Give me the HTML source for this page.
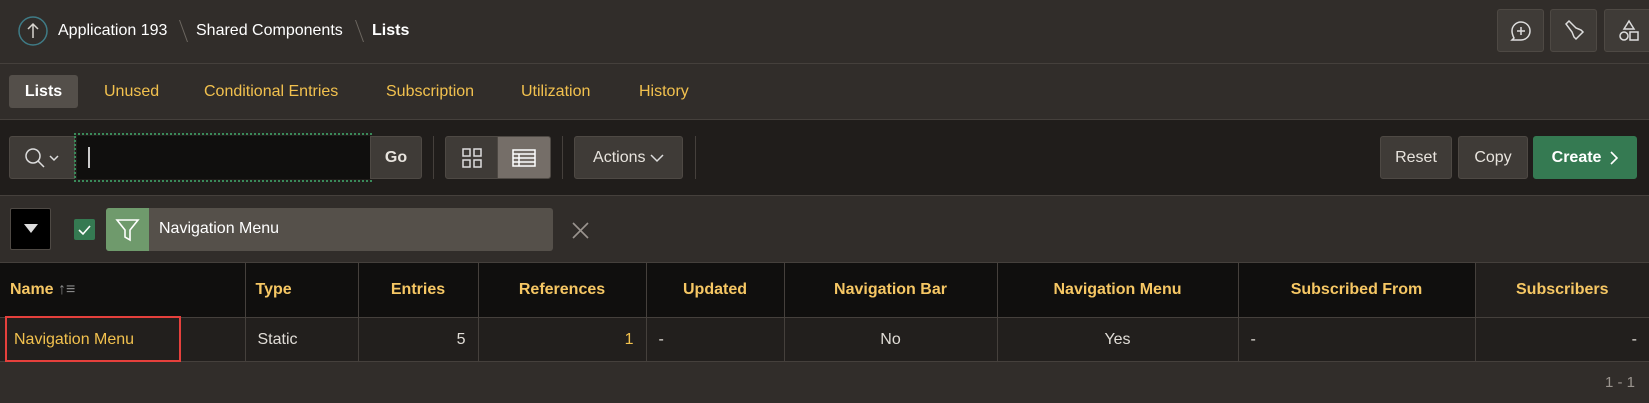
<!DOCTYPE html>
<html><head><meta charset="utf-8"><style>
*{box-sizing:border-box;margin:0;padding:0}
body{width:1649px;height:403px;background:#312d2a;font-family:"Liberation Sans",sans-serif;position:relative;overflow:hidden;color:#e8e4de}
.a{position:absolute}
.btn{position:absolute;background:#3f3b37;border:1px solid #4e4944;border-radius:3px;color:#e8e4de;font-size:16px;display:flex;align-items:center;justify-content:center}
.tab{position:absolute;top:75px;height:33px;line-height:33px;font-size:16px;color:#f2c14e}
th,td{border-right:1px solid #45403c;font-size:16px}
table{border-collapse:collapse;position:absolute;left:0;top:262px;width:1649px;table-layout:fixed}
th{height:55px;background:#100f0e;color:#f6c764;font-weight:bold;text-align:center;border-top:1px solid #45403c;border-bottom:1px solid #45403c}
td{height:44px;background:#221f1d;color:#e0dcd6;border-bottom:1px solid #45403c;padding:0 12px}
.sep{position:absolute;top:20px;width:1px;height:22px;background:#6e6862;transform:skewX(20deg)}
</style></head><body>
<div class="a" style="left:0;top:0;width:1649px;height:64px;border-bottom:1px solid #45403c"></div>
<svg class="a" style="left:18px;top:16px" width="30" height="30" viewBox="0 0 30 30"><circle cx="15" cy="15" r="14" fill="none" stroke="#3f7b86" stroke-width="1.5"/><path d="M15 22V8M10 13l5-5 5 5" fill="none" stroke="#d8d4ce" stroke-width="1.5"/></svg>
<div class="a" style="left:58px;top:22px;font-size:16px;color:#fff">Application 193</div>
<div class="sep" style="left:183px"></div>
<div class="a" style="left:196px;top:22px;font-size:16px;color:#fff">Shared Components</div>
<div class="sep" style="left:359px"></div>
<div class="a" style="left:372px;top:22px;font-size:16px;color:#fff;font-weight:bold">Lists</div>
<div class="btn" style="left:1497px;top:9px;width:47px;height:43px"><svg width="26" height="26" viewBox="0 0 26 26" fill="none" stroke="#ddd" stroke-width="1.5"><path d="M6 20c-1-2-2-4-2-7a9 9 0 1 1 9 9H4z"/><path d="M13 9v8M9 13h8"/></svg></div>
<div class="btn" style="left:1550px;top:9px;width:47px;height:43px"><svg width="26" height="26" viewBox="0 0 26 26" fill="none" stroke="#ddd" stroke-width="1.5"><path d="M5 6l3-3 7 7 5 2 2 2-7 7-2-2-2-5z"/></svg></div>
<div class="btn" style="left:1604px;top:9px;width:50px;height:43px"><svg width="26" height="26" viewBox="0 0 26 26" fill="none" stroke="#ddd" stroke-width="1.5"><path d="M13 3l5 8H8z"/><circle cx="8" cy="18" r="4"/><rect x="14" y="14" width="8" height="8"/></svg></div>
<div class="a" style="left:0;top:64px;width:1649px;height:56px;border-bottom:1px solid #45403c"></div>
<div class="a" style="left:9px;top:75px;width:69px;height:33px;background:#544f4a;border-radius:3px;color:#fff;font-weight:bold;font-size:16px;line-height:33px;text-align:center">Lists</div>
<div class="tab" style="left:104px">Unused</div>
<div class="tab" style="left:204px">Conditional Entries</div>
<div class="tab" style="left:386px">Subscription</div>
<div class="tab" style="left:521px">Utilization</div>
<div class="tab" style="left:639px">History</div>
<div class="a" style="left:0;top:120px;width:1649px;height:76px;background:#201d1b;border-bottom:1px solid #45403c"></div>
<div class="btn" style="left:9px;top:136px;width:66px;height:43px;border-radius:3px 0 0 3px"><svg width="44" height="26" viewBox="0 0 44 26" fill="none" stroke="#ddd" stroke-width="1.5"><circle cx="13" cy="11" r="7"/><path d="M18 16l6 6M30 11l4 4 4-4"/></svg></div>
<div class="a" style="left:74px;top:133px;width:298px;height:49px;border:2px dotted #3a8a5a"></div>
<div class="a" style="left:77px;top:136px;width:293px;height:43px;background:#100f0e"></div>
<div class="a" style="left:88px;top:147px;width:2px;height:21px;background:#ccc"></div>
<div class="btn" style="left:370px;top:136px;width:52px;height:43px;border-radius:0 3px 3px 0;font-weight:bold">Go</div>
<div class="a" style="left:433px;top:136px;width:1px;height:43px;background:#45403c"></div>
<div class="btn" style="left:445px;top:136px;width:53px;height:43px;border-radius:3px 0 0 3px"><svg width="22" height="22" viewBox="0 0 22 22" fill="none" stroke="#ddd" stroke-width="1.5"><rect x="2" y="2" width="7" height="7"/><rect x="13" y="2" width="7" height="7"/><rect x="2" y="13" width="7" height="7"/><rect x="13" y="13" width="7" height="7"/></svg></div>
<div class="btn" style="left:497px;top:136px;width:54px;height:43px;background:#756e68;border-radius:0 3px 3px 0"><svg width="24" height="20" viewBox="0 0 24 20" fill="none" stroke="#fff" stroke-width="1.5"><rect x="1" y="2" width="22" height="16"/><path d="M1 6h22M1 10h22M1 14h22M7 6v12"/></svg></div>
<div class="a" style="left:562px;top:136px;width:1px;height:43px;background:#45403c"></div>
<div class="btn" style="left:574px;top:136px;width:109px;height:43px">Actions&nbsp;<svg width="14" height="10" viewBox="0 0 14 10" fill="none" stroke="#ddd" stroke-width="1.5"><path d="M1 2l6 6 6-6"/></svg></div>
<div class="a" style="left:695px;top:136px;width:1px;height:43px;background:#45403c"></div>
<div class="btn" style="left:1380px;top:136px;width:72px;height:43px">Reset</div>
<div class="btn" style="left:1458px;top:136px;width:70px;height:43px">Copy</div>
<div class="btn" style="left:1533px;top:136px;width:104px;height:43px;background:#357a52;border-color:#357a52;color:#fff;font-weight:bold">Create&nbsp;&nbsp;<svg width="8" height="14" viewBox="0 0 8 14" fill="none" stroke="#fff" stroke-width="1.6"><path d="M1 1l6 6-6 6"/></svg></div>
<div class="a" style="left:10px;top:208px;width:41px;height:42px;background:#000;border:1px solid #4e4944;border-radius:2px"></div>
<div class="a" style="left:24px;top:224px;width:0;height:0;border-left:7px solid transparent;border-right:7px solid transparent;border-top:9px solid #ddd"></div>
<div class="a" style="left:74px;top:219px;width:21px;height:21px;background:#357a52;border-radius:2px"><svg width="21" height="21" viewBox="0 0 21 21" fill="none" stroke="#fff" stroke-width="1.6"><path d="M5 11l4 4 7-8"/></svg></div>
<div class="a" style="left:106px;top:208px;width:447px;height:43px;background:#55504a;border-radius:3px;overflow:hidden"><div style="position:absolute;left:0;top:0;width:43px;height:43px;background:#6f9a6c"><svg width="43" height="43" viewBox="0 0 43 43" fill="none" stroke="#fff" stroke-width="1.6"><path d="M11 12h21l-8 10v10l-5-3v-7z"/></svg></div><div style="position:absolute;left:53px;top:12px;font-size:16px;color:#fff">Navigation Menu</div></div>
<svg class="a" style="left:572px;top:222px" width="17" height="17" viewBox="0 0 17 17" stroke="#9a948e" stroke-width="1.6"><path d="M1 1l15 15M16 1L1 16"/></svg>
<table><colgroup><col style="width:245px"><col style="width:113px"><col style="width:120px"><col style="width:168px"><col style="width:138px"><col style="width:213px"><col style="width:241px"><col style="width:237px"><col style="width:174px"></colgroup>
<tr><th style="text-align:left;padding-left:10px">Name <span style="color:#888;font-weight:normal">↑≡</span></th><th style="text-align:left;padding-left:10px">Type</th><th>Entries</th><th>References</th><th>Updated</th><th>Navigation Bar</th><th>Navigation Menu</th><th>Subscribed From</th><th style="background:#221f1d;border-right:none">Subscribers</th></tr>
<tr><td style="color:#f2c14e;padding-left:14px">Navigation Menu</td><td style="padding-left:12px">Static</td><td style="text-align:right">5</td><td style="text-align:right;color:#f2c14e">1</td><td>-</td><td style="text-align:center">No</td><td style="text-align:center">Yes</td><td>-</td><td style="text-align:right;border-right:none">-</td></tr>
</table>
<div class="a" style="left:5px;top:316px;width:176px;height:46px;border:2px solid #e5403c"></div>
<div class="a" style="left:1605px;top:374px;font-size:15px;color:#9a948e">1 - 1</div>
</body></html>
